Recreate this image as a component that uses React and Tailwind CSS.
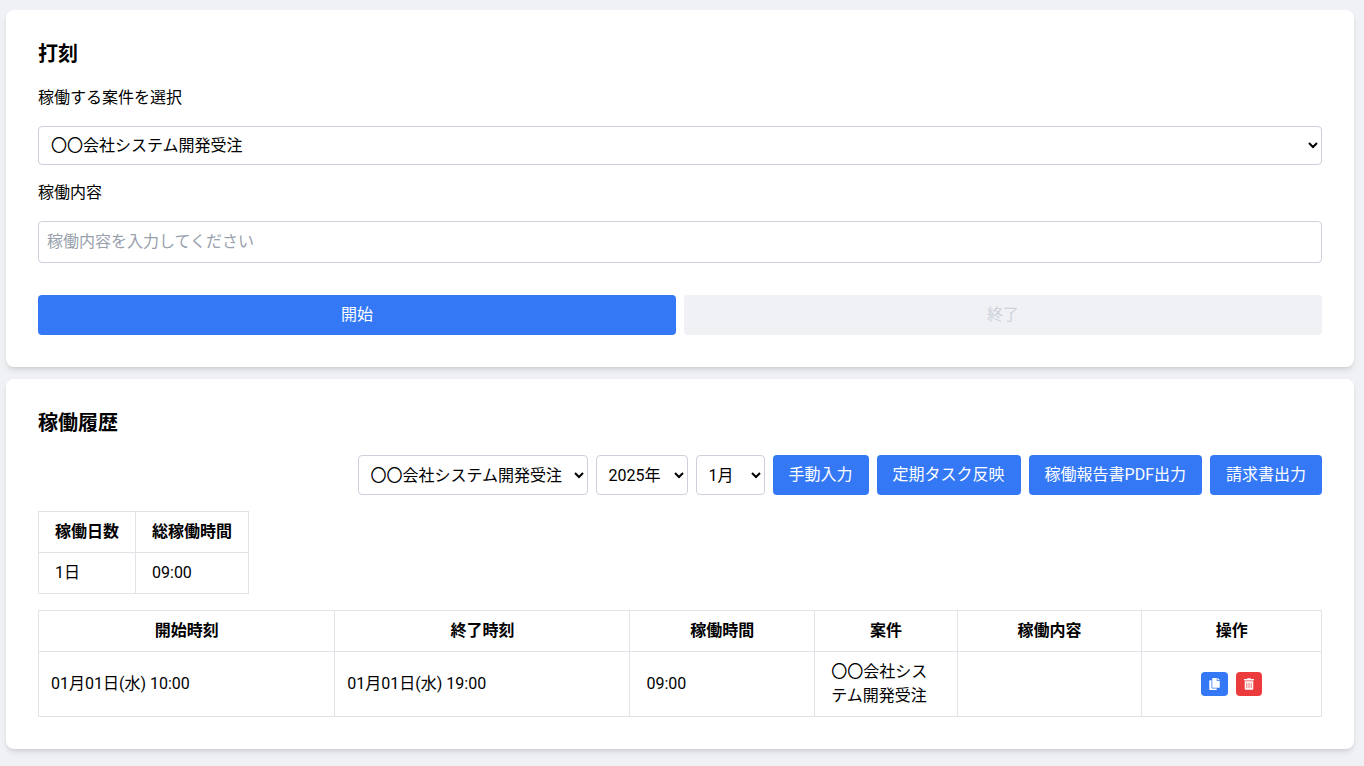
import React, { useState } from "react";
import { FaCopy, FaTrashAlt } from "react-icons/fa";

const PROJECTS = ["〇〇会社システム開発受注"];
const YEARS = ["2024", "2025", "2026"];
const MONTHS = ["1", "2", "3", "4", "5", "6", "7", "8", "9", "10", "11", "12"];

const RECORDS = [
  {
    id: 1,
    start: "01月01日(水) 10:00",
    end: "01月01日(水) 19:00",
    hours: "09:00",
    project: "〇〇会社システム開発受注",
    content: "",
  },
];

function Card({ title, children }) {
  return (
    <section className="bg-white rounded-lg shadow-md p-8">
      <h2 className="text-xl leading-6 font-bold mb-5">{title}</h2>
      {children}
    </section>
  );
}

function PrimaryButton({ className = "", children, ...props }) {
  return (
    <button
      type="button"
      className={`bg-[#3478f6] text-white rounded px-4 py-2 leading-6 whitespace-nowrap ${className}`}
      {...props}
    >
      {children}
    </button>
  );
}

function ClockCard() {
  const [project, setProject] = useState(PROJECTS[0]);
  const [content, setContent] = useState("");

  return (
    <Card title="打刻">
      <div className="flex flex-col gap-4">
        <label htmlFor="project">稼働する案件を選択</label>
        <select
          id="project"
          value={project}
          onChange={(e) => setProject(e.target.value)}
          className="w-full h-[39px] bg-white border border-[#cdd1da] rounded px-2"
        >
          {PROJECTS.map((name) => (
            <option key={name}>{name}</option>
          ))}
        </select>
        <label htmlFor="content">稼働内容</label>
        <input
          id="content"
          type="text"
          value={content}
          onChange={(e) => setContent(e.target.value)}
          placeholder="稼働内容を入力してください"
          className="w-full border border-[#cdd1da] rounded p-2 leading-6 placeholder:text-[#989fad]"
        />
      </div>
      <div className="grid grid-cols-2 gap-2 mt-8">
        <PrimaryButton>開始</PrimaryButton>
        <button
          type="button"
          disabled
          className="bg-[#f0f1f5] text-[#cdd1da] rounded px-4 py-2 leading-6"
        >
          終了
        </button>
      </div>
    </Card>
  );
}

function HistoryCard() {
  const [project, setProject] = useState(PROJECTS[0]);
  const [year, setYear] = useState("2025");
  const [month, setMonth] = useState("1");

  return (
    <Card title="稼働履歴">
      {/* Filters and output buttons */}
      <div className="flex flex-wrap justify-end gap-2">
        <select
          aria-label="案件"
          value={project}
          onChange={(e) => setProject(e.target.value)}
          className="w-[230px] h-10 bg-white border border-[#cdd1da] rounded px-2"
        >
          {PROJECTS.map((name) => (
            <option key={name}>{name}</option>
          ))}
        </select>
        <select
          aria-label="年"
          value={year}
          onChange={(e) => setYear(e.target.value)}
          className="w-[92px] h-10 bg-white border border-[#cdd1da] rounded px-2"
        >
          {YEARS.map((y) => (
            <option key={y} value={y}>{y}年</option>
          ))}
        </select>
        <select
          aria-label="月"
          value={month}
          onChange={(e) => setMonth(e.target.value)}
          className="w-[69px] h-10 bg-white border border-[#cdd1da] rounded px-2"
        >
          {MONTHS.map((m) => (
            <option key={m} value={m}>{m}月</option>
          ))}
        </select>
        <PrimaryButton>手動入力</PrimaryButton>
        <PrimaryButton>定期タスク反映</PrimaryButton>
        <PrimaryButton>稼働報告書PDF出力</PrimaryButton>
        <PrimaryButton>請求書出力</PrimaryButton>
      </div>

      {/* Monthly totals */}
      <table className="mt-4 border-collapse">
        <thead>
          <tr>
            <th className="border border-[#e2e3e9] px-4 py-2">稼働日数</th>
            <th className="border border-[#e2e3e9] px-4 py-2">総稼働時間</th>
          </tr>
        </thead>
        <tbody>
          <tr>
            <td className="border border-[#e2e3e9] px-4 py-2">1日</td>
            <td className="border border-[#e2e3e9] px-4 py-2">09:00</td>
          </tr>
        </tbody>
      </table>

      {/* Work records */}
      <table className="mt-4 w-full table-fixed border-collapse">
        <thead>
          <tr>
            <th className="w-[23.1%] border border-[#e2e3e9] px-4 py-2">開始時刻</th>
            <th className="w-[23%] border border-[#e2e3e9] px-4 py-2">終了時刻</th>
            <th className="w-[14.4%] border border-[#e2e3e9] px-4 py-2">稼働時間</th>
            <th className="w-[11.1%] border border-[#e2e3e9] px-4 py-2">案件</th>
            <th className="w-[14.4%] border border-[#e2e3e9] px-4 py-2">稼働内容</th>
            <th className="w-[14%] border border-[#e2e3e9] px-4 py-2">操作</th>
          </tr>
        </thead>
        <tbody>
          {RECORDS.map((record) => (
            <tr key={record.id}>
              <td className="border border-[#e2e3e9] px-3 py-2">{record.start}</td>
              <td className="border border-[#e2e3e9] px-3 py-2">{record.end}</td>
              <td className="border border-[#e2e3e9] px-4 py-2">{record.hours}</td>
              <td className="border border-[#e2e3e9] px-4 py-2">{record.project}</td>
              <td className="border border-[#e2e3e9] px-4 py-2">{record.content}</td>
              <td className="border border-[#e2e3e9] px-4 py-2">
                <div className="flex justify-center gap-2">
                  <button
                    type="button"
                    aria-label="複製"
                    className="bg-[#3478f6] text-white rounded px-2 py-1.5"
                  >
                    <FaCopy className="w-[11px] h-3" />
                  </button>
                  <button
                    type="button"
                    aria-label="削除"
                    className="bg-[#eb3b3d] text-white rounded px-2 py-1.5"
                  >
                    <FaTrashAlt className="w-[10px] h-3" />
                  </button>
                </div>
              </td>
            </tr>
          ))}
        </tbody>
      </table>
    </Card>
  );
}

export default function App() {
  return (
    <main className="min-h-screen bg-[#f0f1f5] pt-2.5 pl-1.5 pr-2.5 pb-4 flex flex-col gap-3 text-base text-black font-['Roboto','Noto_Sans_CJK_JP',sans-serif]">
      <ClockCard />
      <HistoryCard />
    </main>
  );
}
